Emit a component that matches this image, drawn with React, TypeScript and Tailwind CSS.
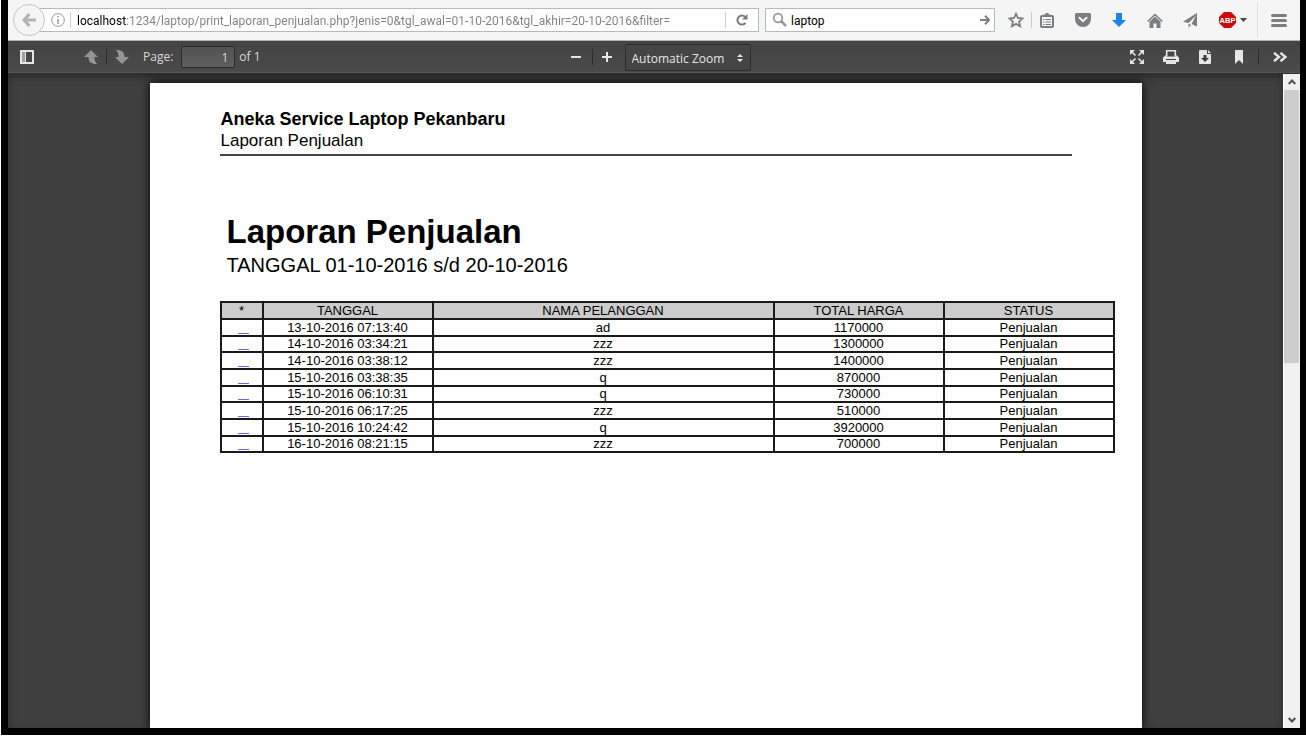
import { ReactNode } from "react";
import { clsx } from "clsx";

const sales = [
  { date: "13-10-2016 07:13:40", customer: "ad", total: "1170000", status: "Penjualan" },
  { date: "14-10-2016 03:34:21", customer: "zzz", total: "1300000", status: "Penjualan" },
  { date: "14-10-2016 03:38:12", customer: "zzz", total: "1400000", status: "Penjualan" },
  { date: "15-10-2016 03:38:35", customer: "q", total: "870000", status: "Penjualan" },
  { date: "15-10-2016 06:10:31", customer: "q", total: "730000", status: "Penjualan" },
  { date: "15-10-2016 06:17:25", customer: "zzz", total: "510000", status: "Penjualan" },
  { date: "15-10-2016 10:24:42", customer: "q", total: "3920000", status: "Penjualan" },
  { date: "16-10-2016 08:21:15", customer: "zzz", total: "700000", status: "Penjualan" },
];

interface IconButtonProps {
  label: string;
  className?: string;
  children: ReactNode;
}

const IconButton = ({ label, className, children }: IconButtonProps) => (
  <button
    type="button"
    aria-label={label}
    title={label}
    className={clsx("flex shrink-0 items-center justify-center", className)}
  >
    {children}
  </button>
);

const Divider = ({ className }: { className: string }) => (
  <span className={clsx("w-px shrink-0", className)} />
);

function AddressBar() {
  return (
    <form className="flex min-w-0 flex-1 items-center" onSubmit={(e) => e.preventDefault()}>
      <IconButton
        label="Back"
        className="z-10 size-8 rounded-full border border-[#c6c6c6] bg-[#f5f5f5] text-[#b4b4b4]"
      >
        <svg width="14" height="14" viewBox="0 0 14 14" fill="none" stroke="currentColor" strokeWidth="3">
          <path d="M7.500 1 2 7l5.500 6M2.500 7H14" />
        </svg>
      </IconButton>
      <div className="-ml-3 flex h-6 min-w-0 flex-1 items-center border border-[#b1bac5] bg-white pl-3">
        <IconButton label="Site information" className="w-6 text-[#999]">
          <svg width="14" height="14" viewBox="0 0 14 14" fill="none" stroke="currentColor">
            <circle cx="7" cy="7" r="6.300" />
            <path d="M7 6v5M7 3v1.600" strokeWidth="1.500" />
          </svg>
        </IconButton>
        <Divider className="h-4 bg-[#cfcfcf]" />
        <input
          aria-label="Address"
          defaultValue="localhost:1234/laptop/print_laporan_penjualan.php?jenis=0&tgl_awal=01-10-2016&tgl_akhir=20-10-2016&filter="
          className="ml-1.5 h-5 min-w-0 flex-1 bg-[linear-gradient(to_right,#000_49px,#808080_49px)] bg-clip-text pt-0.5 font-['Roboto','Open_Sans',sans-serif] text-[12px] text-transparent outline-none"
        />
        <Divider className="h-4 bg-[#cfcfcf]" />
        <IconButton label="Reload" className="h-full w-8 text-[#7a7a7a]">
          <svg width="12" height="12" viewBox="0 0 12 12" fill="none" stroke="currentColor" strokeWidth="2">
            <path d="M9.500 8.800A4.500 4.500 0 1 1 9.200 3" />
            <path d="M11.500 0v5.500H6z" fill="currentColor" stroke="none" />
          </svg>
        </IconButton>
      </div>
    </form>
  );
}

function SearchBar() {
  return (
    <form
      className="ml-1.5 flex h-6 w-[230px] shrink-0 items-center border border-[#b1bac5] bg-white px-1"
      onSubmit={(e) => e.preventDefault()}
    >
      <svg width="16" height="16" viewBox="0 0 16 16" fill="none" stroke="#999" className="ml-0.5 shrink-0">
        <circle cx="6" cy="6" r="4.300" strokeWidth="1.800" />
        <path d="m9 9 5 5" strokeWidth="2.500" />
      </svg>
      <input
        aria-label="Search"
        defaultValue="laptop"
        className="h-5 min-w-0 flex-1 pt-0.5 pl-[3px] font-['Roboto','Open_Sans',sans-serif] text-[12px] text-black outline-none"
      />
      <IconButton label="Go" className="text-[#7f7f7f]">
        <svg width="10" height="10" viewBox="0 0 10 10" fill="none" stroke="currentColor" strokeWidth="2">
          <path d="M5 .8 9 5 5 9.200M0 5h9" />
        </svg>
      </IconButton>
    </form>
  );
}

function BrowserBar() {
  return (
    <header className="flex h-[41px] shrink-0 items-center border-b border-[#b5b5b5] bg-[#f5f5f5] pl-[5px]">
      <AddressBar />
      <SearchBar />
      <div className="flex h-full shrink-0 items-center text-[#7b7d80]">
        <IconButton label="Bookmark this page" className="ml-1 w-[34px]">
          <svg width="16" height="16" viewBox="0 0 16 16" fill="none" stroke="currentColor" strokeWidth="1.800">
            <path d="m8 1.800 1.900 4.200 4.600.5-3.400 3.100 1 4.600L8 11.900l-4.100 2.300 1-4.600L1.500 6.500l4.600-.5z" />
          </svg>
        </IconButton>
        <Divider className="-ml-0.5 h-4 bg-[#c9c9c9]" />
        <IconButton label="Show your bookmarks" className="w-[30px]">
          <svg width="14" height="15" viewBox="0 0 14 15" fill="none" stroke="currentColor">
            <rect x="1" y="3" width="12" height="11" rx="1" strokeWidth="2" />
            <path d="M3.500 2.500h7M5.500 1h3" strokeWidth="2" />
            <path d="M3 6.500h1.500M5.500 6.500H11M3 9h1.500M5.500 9H11M3 11.500h1.500M5.500 11.500H11" strokeWidth="1.200" />
          </svg>
        </IconButton>
        <IconButton label="Save to Pocket" className="w-[42px]">
          <svg width="16" height="14" viewBox="0 0 16 14">
            <path d="M1.500 0h13A1.500 1.500 0 0 1 16 1.500V6a8 8 0 0 1-16 0V1.500A1.500 1.500 0 0 1 1.500 0z" fill="currentColor" />
            <path d="m4.500 4.800 3.500 3.400 3.500-3.400" fill="none" stroke="#f5f5f5" strokeWidth="2" strokeLinecap="round" />
          </svg>
        </IconButton>
        <IconButton label="Downloads" className="w-[30px] text-[#1c83e8]">
          <svg width="14" height="14" viewBox="0 0 14 14" fill="currentColor">
            <path d="M4 0h6v7h4l-7 7-7-7h4z" />
          </svg>
        </IconButton>
        <IconButton label="Home" className="w-[42px]">
          <svg width="16" height="15" viewBox="0 0 16 15" fill="currentColor">
            <path d="m8 3.500 5.500 5.200V15h-4v-4.500h-3V15h-4V8.700z" />
            <path d="M.7 8.500 8 1.500l7.300 7" fill="none" stroke="currentColor" strokeWidth="1.600" />
          </svg>
        </IconButton>
        <IconButton label="Send tab" className="w-7">
          <svg width="14" height="15" viewBox="0 0 14 15" fill="currentColor">
            <path d="M14 0v13.500L8.500 11 13 2.500 5.500 10 0 8.800z" />
            <path d="M5.500 10.500 8 12l-2.500 2.500z" />
          </svg>
        </IconButton>
        <IconButton label="Adblock Plus" className="w-[53px] gap-1 pl-1">
          <svg width="17" height="16" viewBox="0 0 17 16">
            <path d="M5 0h7l5 5v6l-5 5H5l-5-5V5z" fill="#cc0a0a" />
            <text x="8.500" y="10.700" textAnchor="middle" fontSize="7.500" fontWeight="700" fontFamily="Liberation Sans, sans-serif" fill="#fff">
              ABP
            </text>
          </svg>
          <svg width="7" height="4" viewBox="0 0 7 4" fill="#444">
            <path d="M0 0h7L3.500 4z" />
          </svg>
        </IconButton>
        <Divider className="h-9 bg-[#dedede]" />
        <IconButton label="Open menu" className="w-[42px]">
          <svg width="16" height="13" viewBox="0 0 16 13" stroke="currentColor" strokeWidth="3" strokeLinecap="round">
            <path d="M1.500 1.500h13M1.500 6.500h13M1.500 11.500h13" />
          </svg>
        </IconButton>
      </div>
    </header>
  );
}

function ViewerToolbar() {
  return (
    <div className="z-10 grid h-8 shrink-0 grid-cols-[1fr_auto_1fr] items-center bg-linear-to-b from-[#444] to-[#4a4a4a] text-[12px] text-[#d9d9d9] shadow-[0_1px_0_#2e2e2e,inset_0_-1px_0_#555]">
      <div className="flex items-center">
        <IconButton label="Toggle Sidebar" className="ml-3">
          <svg width="14" height="14" viewBox="0 0 14 14">
            <rect x="1" y="1" width="12" height="12" fill="none" stroke="#e6e6e6" strokeWidth="2" />
            <rect x="2" y="2" width="3" height="10" fill="#a0a0a0" />
            <path d="M5.500 2v10" stroke="#e6e6e6" strokeWidth="1" />
          </svg>
        </IconButton>
        <IconButton label="Previous Page" className="ml-[50px] text-[#949494]">
          <svg width="14" height="14" viewBox="0 0 14 14" fill="currentColor">
            <path d="m7 0 7 7h-3.500c0 3 .5 5 2.500 7-5 0-8.500-1-8.500-7H0z" />
          </svg>
        </IconButton>
        <Divider className="ml-2 h-4 bg-[#2b2b2b]" />
        <IconButton label="Next Page" className="ml-2 text-[#949494]">
          <svg width="14" height="14" viewBox="0 0 14 14" fill="currentColor">
            <path d="M1 0c5 0 8.500 1 8.500 7H14l-7 7-7-7h3.500C3.500 4 3 2 1 0z" />
          </svg>
        </IconButton>
        <label htmlFor="page-number" className="ml-3.5">Page:</label>
        <input
          id="page-number"
          defaultValue="1"
          className="ml-2 h-[22px] w-[54px] rounded-xs border border-[#2b2b2b] bg-linear-to-b from-[#525252] to-[#5e5e5e] px-1.5 text-right outline-none"
        />
        <span className="ml-1">of 1</span>
      </div>

      <div className="flex items-center pr-0.5">
        <IconButton label="Zoom Out" className="ml-2 w-6">
          <svg width="10" height="10" viewBox="0 0 10 10" stroke="#e6e6e6" strokeWidth="2">
            <path d="M0 5h10" />
          </svg>
        </IconButton>
        <Divider className="ml-1 h-4 bg-[#2b2b2b]" />
        <IconButton label="Zoom In" className="ml-0.5 w-6">
          <svg width="10" height="10" viewBox="0 0 10 10" stroke="#e6e6e6" strokeWidth="2">
            <path d="M0 5h10M5 0v10" />
          </svg>
        </IconButton>
        <div className="relative ml-1.5">
          <select
            aria-label="Zoom"
            className="h-[27px] w-[126px] appearance-none rounded-xs border border-[#2b2b2b] bg-[#454545] pt-1 pl-1.5 text-[12px] text-[#e6e6e6] outline-none"
          >
            <option>Automatic Zoom</option>
          </select>
          <svg width="6" height="8" viewBox="0 0 6 8" fill="#e6e6e6" className="pointer-events-none absolute top-2.5 right-2">
            <path d="m3 0 3 3H0zM3 8l3-3H0z" />
          </svg>
        </div>
      </div>

      <div className="flex items-center justify-end text-[#e6e6e6]">
        <IconButton label="Presentation Mode" className="w-[34px]">
          <svg width="14" height="14" viewBox="0 0 14 14" fill="currentColor" stroke="currentColor">
            <path d="M0 0h5L0 5zM14 0H9l5 5zM0 14h5L0 9zM14 14H9l5-5z" stroke="none" />
            <path d="m1 1 4.500 4.500M13 1 8.500 5.500M1 13l4.500-4.500M13 13 8.500 8.500" strokeWidth="1.600" />
          </svg>
        </IconButton>
        <IconButton label="Print" className="w-[34px]">
          <svg width="16" height="14" viewBox="0 0 16 14">
            <path d="M3.700 6V.8h8.600V6" fill="none" stroke="currentColor" strokeWidth="1.600" strokeLinejoin="round" />
            <path d="M3 5l1 1.500h8L13 5l3 2.500V12H0V7.500z" fill="currentColor" />
            <path d="M3 9.500h10" stroke="#444" />
            <path d="M3 10h10v4H3z" fill="currentColor" />
          </svg>
        </IconButton>
        <IconButton label="Download" className="w-[34px]">
          <svg width="12" height="14" viewBox="0 0 12 14">
            <path d="M1 0h7v4h4v9a1 1 0 0 1-1 1H1a1 1 0 0 1-1-1V1a1 1 0 0 1 1-1zM9 0l3 3H9z" fill="currentColor" />
            <path d="M4.500 5h3v3H10l-4 4-4-4h2.500z" fill="#3c3c3c" />
          </svg>
        </IconButton>
        <IconButton label="Current View" className="w-[34px]">
          <svg width="8" height="14" viewBox="0 0 8 14" fill="currentColor">
            <path d="M0 0h8v14l-4-4-4 4z" />
          </svg>
        </IconButton>
        <Divider className="ml-0.5 h-4 bg-[#2b2b2b]" />
        <IconButton label="Tools" className="w-[41px]">
          <svg width="14" height="10" viewBox="0 0 14 10" fill="none" stroke="currentColor" strokeWidth="2.400">
            <path d="m1 .8 5 4.200-5 4.200M7.500.8l5 4.200-5 4.200" />
          </svg>
        </IconButton>
      </div>
    </div>
  );
}

function Report() {
  return (
    <article className="mt-2.5 w-full max-w-[992px] bg-white pt-6 pr-[70px] pl-[70px] font-['Liberation_Sans',Arial,sans-serif] text-black shadow-[0_0_10px_#000]">
      <header className="border-b-2 border-[#444] pb-[3px] pl-px">
        <p className="text-[18px] leading-6 font-bold">Aneka Service Laptop Pekanbaru</p>
        <p className="text-[17px] leading-5">Laporan Penjualan</p>
      </header>
      <h1 className="mt-[58px] pl-[7px] text-[33px] leading-9 font-bold">Laporan Penjualan</h1>
      <p className="pl-[7px] text-[20px] leading-[30px]">TANGGAL 01-10-2016 s/d 20-10-2016</p>
      <div className="mt-[21px] -mr-[43px]">
        <table className="w-full table-fixed border-collapse text-center text-[13px] leading-3">
          <colgroup>
            <col className="w-[42px]" />
            <col className="w-[170px]" />
            <col />
            <col className="w-[170px]" />
            <col className="w-[170px]" />
          </colgroup>
          <thead>
            <tr className="h-[17px] bg-[#ccc]">
              {["*", "TANGGAL", "NAMA PELANGGAN", "TOTAL HARGA", "STATUS"].map((title) => (
                <th key={title} className="border-2 border-[#1a1a1a] p-0 font-normal">{title}</th>
              ))}
            </tr>
          </thead>
          <tbody>
            {sales.map((sale) => (
              <tr key={sale.date} className="h-[17px] nth-[3n+2]:h-4">
                <td className="border-2 border-[#1a1a1a] p-0 pl-1">
                  <a href="#detail" aria-label={`Detail ${sale.date}`} className="underline decoration-[#6666ff] decoration-1 underline-offset-1">
                    {"\u00a0\u00a0\u00a0"}
                  </a>
                </td>
                <td className="border-2 border-[#1a1a1a] p-0">{sale.date}</td>
                <td className="border-2 border-[#1a1a1a] p-0">{sale.customer}</td>
                <td className="border-2 border-[#1a1a1a] p-0">{sale.total}</td>
                <td className="border-2 border-[#1a1a1a] p-0">{sale.status}</td>
              </tr>
            ))}
          </tbody>
        </table>
      </div>
    </article>
  );
}

function Scrollbar() {
  return (
    <div className="flex w-[17px] shrink-0 flex-col border-l border-white bg-[#f0f0f0] text-[#505050]">
      <IconButton label="Scroll up" className="h-[17px]">
        <svg width="8" height="6" viewBox="0 0 8 6" fill="none" stroke="currentColor" strokeWidth="2">
          <path d="m.7 5 3.300-3.500L7.300 5" />
        </svg>
      </IconButton>
      <div className="flex-1">
        <div className="mr-px h-[44%] bg-[#cdcdcd]" />
      </div>
      <IconButton label="Scroll down" className="h-[17px]">
        <svg width="8" height="6" viewBox="0 0 8 6" fill="none" stroke="currentColor" strokeWidth="2">
          <path d="M.7 1 4 4.500 7.300 1" />
        </svg>
      </IconButton>
    </div>
  );
}

export default function App() {
  return (
    <div className="flex h-screen flex-col border-b border-l border-white bg-black pr-1.5 pb-[7px] pl-[7px] font-['Open_Sans','Noto_Sans',sans-serif]">
      <BrowserBar />
      <ViewerToolbar />
      <div className="flex min-h-0 flex-1">
        <main className="flex min-w-0 flex-1 justify-center overflow-hidden bg-[#404040] shadow-[inset_0_4px_8px_#2a2a2a]">
          <Report />
        </main>
        <Scrollbar />
      </div>
    </div>
  );
}
